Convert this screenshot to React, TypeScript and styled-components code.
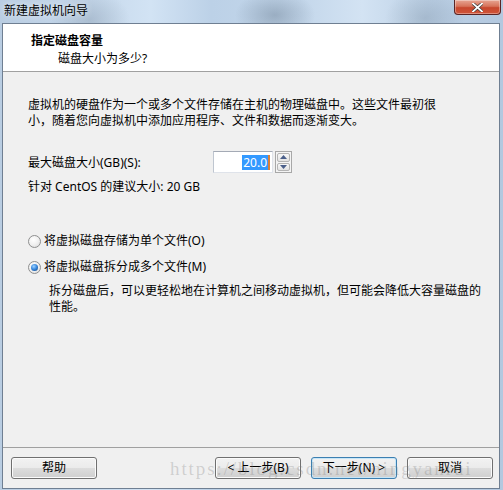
import React from "react";
import styled, { createGlobalStyle } from "styled-components";

const Global = createGlobalStyle`
  html, body { margin: 0; padding: 0; }
  body {
    width: 503px; height: 490px; overflow: hidden;
    font-family: "Noto Sans", "Noto Sans CJK SC", sans-serif;
    font-size: 12px; color: #000;
  }
`;

const Window = styled.div`
  position: relative;
  width: 503px;
  height: 490px;
  box-sizing: border-box;
  padding: 0 3px 1px 2px;
  display: flex;
  flex-direction: column;
  background:
    radial-gradient(ellipse 40px 30px at 90px 20px, rgba(120,140,160,0.35), transparent),
    radial-gradient(ellipse 40px 25px at 275px 15px, rgba(80,100,120,0.35), transparent),
    radial-gradient(ellipse 40px 30px at 425px 18px, rgba(110,130,150,0.3), transparent),
    linear-gradient(90deg, #b9cde2 0%, #c6d8eb 18%, #d2e3f4 30%, #bcd1e7 42%, #c4d7eb 60%, #d3e3f3 72%, #bdd1e6 85%, #b3c8df 100%);
`;

const TitleBar = styled.div`
  height: 23px;
  display: flex;
  align-items: flex-start;
  justify-content: space-between;
`;

const TitleText = styled.span`
  padding: 2px 0 0 2px;
  font-size: 12px;
  line-height: 17px;
  color: #000;
  text-shadow: 0 0 6px rgba(255,255,255,0.9);
`;

const CloseButton = styled.div`
  width: 47px;
  height: 15px;
  margin-right: -1px;
  box-sizing: border-box;
  border: 1px solid #5a2424;
  border-top: none;
  border-radius: 0 0 4px 4px;
  background: linear-gradient(180deg, #e7a593 0%, #d7735a 45%, #c7472d 55%, #d0553a 100%);
  display: flex;
  align-items: center;
  justify-content: center;
  box-shadow: inset 0 0 0 1px rgba(255,255,255,0.35);
`;

const Client = styled.div`
  flex: 1;
  display: flex;
  flex-direction: column;
  border: 1px solid #6f7f92;
  background: #f0f0f0;
`;

const Header = styled.div`
  height: 48px;
  box-sizing: border-box;
  background: #fff;
  border-bottom: 1px solid #a0a0a0;
  padding: 8px 0 0 28px;
  display: flex;
  flex-direction: column;
`;

const HeaderTitle = styled.div`
  font-weight: bold;
  line-height: 17px;
`;

const HeaderSub = styled.div`
  padding-left: 27px;
  line-height: 17px;
  margin-top: 1px;
`;

const Body = styled.div`
  flex: 1;
  padding: 25px 0 0 25px;
  display: flex;
  flex-direction: column;
`;

const Paragraph = styled.p<{ $indent?: number; $top?: number }>`
  margin: ${(p) => p.$top ?? 0}px 0 0 ${(p) => p.$indent ?? 0}px;
  line-height: 16px;
  white-space: nowrap;
`;

const SizeRow = styled.div`
  margin-top: 22px;
  display: flex;
  align-items: center;
  height: 22px;
`;

const SizeLabel = styled.span`
  width: 185px;
`;

const SpinBox = styled.div`
  display: flex;
  gap: 2px;
`;

const TextBox = styled.div`
  width: 60px;
  height: 22px;
  box-sizing: border-box;
  border: 1px solid #dfe3ea;
  border-top-color: #a4aab5;
  border-left-color: #bfc6d0;
  background: #fff;
  display: flex;
  align-items: center;
  justify-content: flex-end;
  padding-right: 2px;
`;

const Selected = styled.span`
  background: #3399ff;
  color: #fff;
  line-height: 15px;
  padding: 0 1px;
  border-right: 2px solid #d8803a;
`;

const SpinButtons = styled.div`
  width: 17px;
  height: 22px;
  box-sizing: border-box;
  border: 1px solid #a8a8a8;
  padding: 1px;
  display: flex;
  flex-direction: column;
  gap: 1px;
  background: #f4f4f4;
`;

const SpinBtn = styled.div`
  flex: 1;
  box-sizing: border-box;
  border: 1px solid #b4b4b4;
  border-radius: 2px;
  background: linear-gradient(180deg, #f7f7f7, #e3e3e3);
  display: flex;
  align-items: center;
  justify-content: center;
`;

const Radio = styled.label`
  display: flex;
  align-items: center;
  gap: 3px;
  line-height: 16px;
`;

const RadioCircle = styled.span<{ $checked?: boolean }>`
  width: 13px;
  height: 13px;
  box-sizing: border-box;
  border-radius: 50%;
  border: 1px solid #8e8f8f;
  background: radial-gradient(circle at 40% 35%, #ffffff 0%, #f0f0f0 50%, #d7d7d7 100%);
  display: flex;
  align-items: center;
  justify-content: center;
  &::after {
    content: "";
    display: ${(p) => (p.$checked ? "block" : "none")};
    width: 7px;
    height: 7px;
    border-radius: 50%;
    background: radial-gradient(circle at 40% 35%, #9fd3ff 0%, #3b8be0 45%, #0c3d7a 100%);
  }
`;

const Footer = styled.div`
  position: relative;
  height: 41px;
  box-sizing: border-box;
  border-top: 1px solid #a0a0a0;
  padding: 9px 6px 0 8px;
  display: flex;
  align-items: flex-start;
`;

const Spacer = styled.div`
  flex: 1;
`;

const NavGroup = styled.div`
  display: flex;
  gap: 10px;
`;

const Button = styled.div<{ $default?: boolean }>`
  width: 86px;
  height: 22px;
  box-sizing: border-box;
  border: 1px solid ${(p) => (p.$default ? "#3c7fb1" : "#707070")};
  border-radius: 3px;
  background: linear-gradient(180deg, #f2f2f2 0%, #ebebeb 50%, #dddddd 50%, #cfcfcf 100%);
  box-shadow: inset 0 0 0 1px ${(p) => (p.$default ? "#c6e6f8" : "#fbfbfb")};
  display: flex;
  align-items: center;
  justify-content: center;
  line-height: 16px;
`;

const Watermark = styled.div`
  position: absolute;
  left: 167px;
  top: 10px;
  font-family: "Liberation Serif", serif;
  font-size: 19px;
  letter-spacing: 1.9px;
  color: rgba(120, 120, 120, 0.28);
  white-space: nowrap;
  pointer-events: none;
`;

const Arrow = ({ up }: { up?: boolean }) => (
  <svg width="7" height="4" viewBox="0 0 7 4">
    <path d={up ? "M0 4 L3.5 0 L7 4 Z" : "M0 0 L3.5 4 L7 0 Z"} fill="#4a5f8a" />
  </svg>
);

export default function App() {
  return (
    <>
      <Global />
      <Window>
        <TitleBar>
          <TitleText>新建虚拟机向导</TitleText>
          <CloseButton>
            <svg width="11" height="9" viewBox="0 0 11 9">
              <path d="M1 0.5 L10 8.5 M10 0.5 L1 8.5" stroke="#3b3b3b" strokeWidth="3.2" strokeLinecap="square" />
              <path d="M1 0.5 L10 8.5 M10 0.5 L1 8.5" stroke="#ffffff" strokeWidth="1.8" strokeLinecap="square" />
            </svg>
          </CloseButton>
        </TitleBar>
        <Client>
          <Header>
            <HeaderTitle>指定磁盘容量</HeaderTitle>
            <HeaderSub>磁盘大小为多少?</HeaderSub>
          </Header>
          <Body>
            <Paragraph>
              虚拟机的硬盘作为一个或多个文件存储在主机的物理磁盘中。这些文件最初很
              <br />
              小，随着您向虚拟机中添加应用程序、文件和数据而逐渐变大。
            </Paragraph>
            <SizeRow>
              <SizeLabel>最大磁盘大小(GB)(S):</SizeLabel>
              <SpinBox>
                <TextBox>
                  <Selected>20.0</Selected>
                </TextBox>
                <SpinButtons>
                  <SpinBtn>
                    <Arrow up />
                  </SpinBtn>
                  <SpinBtn>
                    <Arrow />
                  </SpinBtn>
                </SpinButtons>
              </SpinBox>
            </SizeRow>
            <Paragraph $top={6}>针对 CentOS 的建议大小: 20 GB</Paragraph>
            <Paragraph $top={38} as="div">
              <Radio>
                <RadioCircle />
                将虚拟磁盘存储为单个文件(O)
              </Radio>
            </Paragraph>
            <Paragraph $top={10} as="div">
              <Radio>
                <RadioCircle $checked />
                将虚拟磁盘拆分成多个文件(M)
              </Radio>
            </Paragraph>
            <Paragraph $indent={21} $top={8}>
              拆分磁盘后，可以更轻松地在计算机之间移动虚拟机，但可能会降低大容量磁盘的
              <br />
              性能。
            </Paragraph>
          </Body>
          <Footer>
            <Button>帮助</Button>
            <Spacer />
            <NavGroup>
              <Button>&lt; 上一步(B)</Button>
              <Button $default>下一步(N) &gt;</Button>
              <Button>取消</Button>
            </NavGroup>
            <Watermark>https://blog.csdn.net/ningyanrui</Watermark>
          </Footer>
        </Client>
      </Window>
    </>
  );
}
